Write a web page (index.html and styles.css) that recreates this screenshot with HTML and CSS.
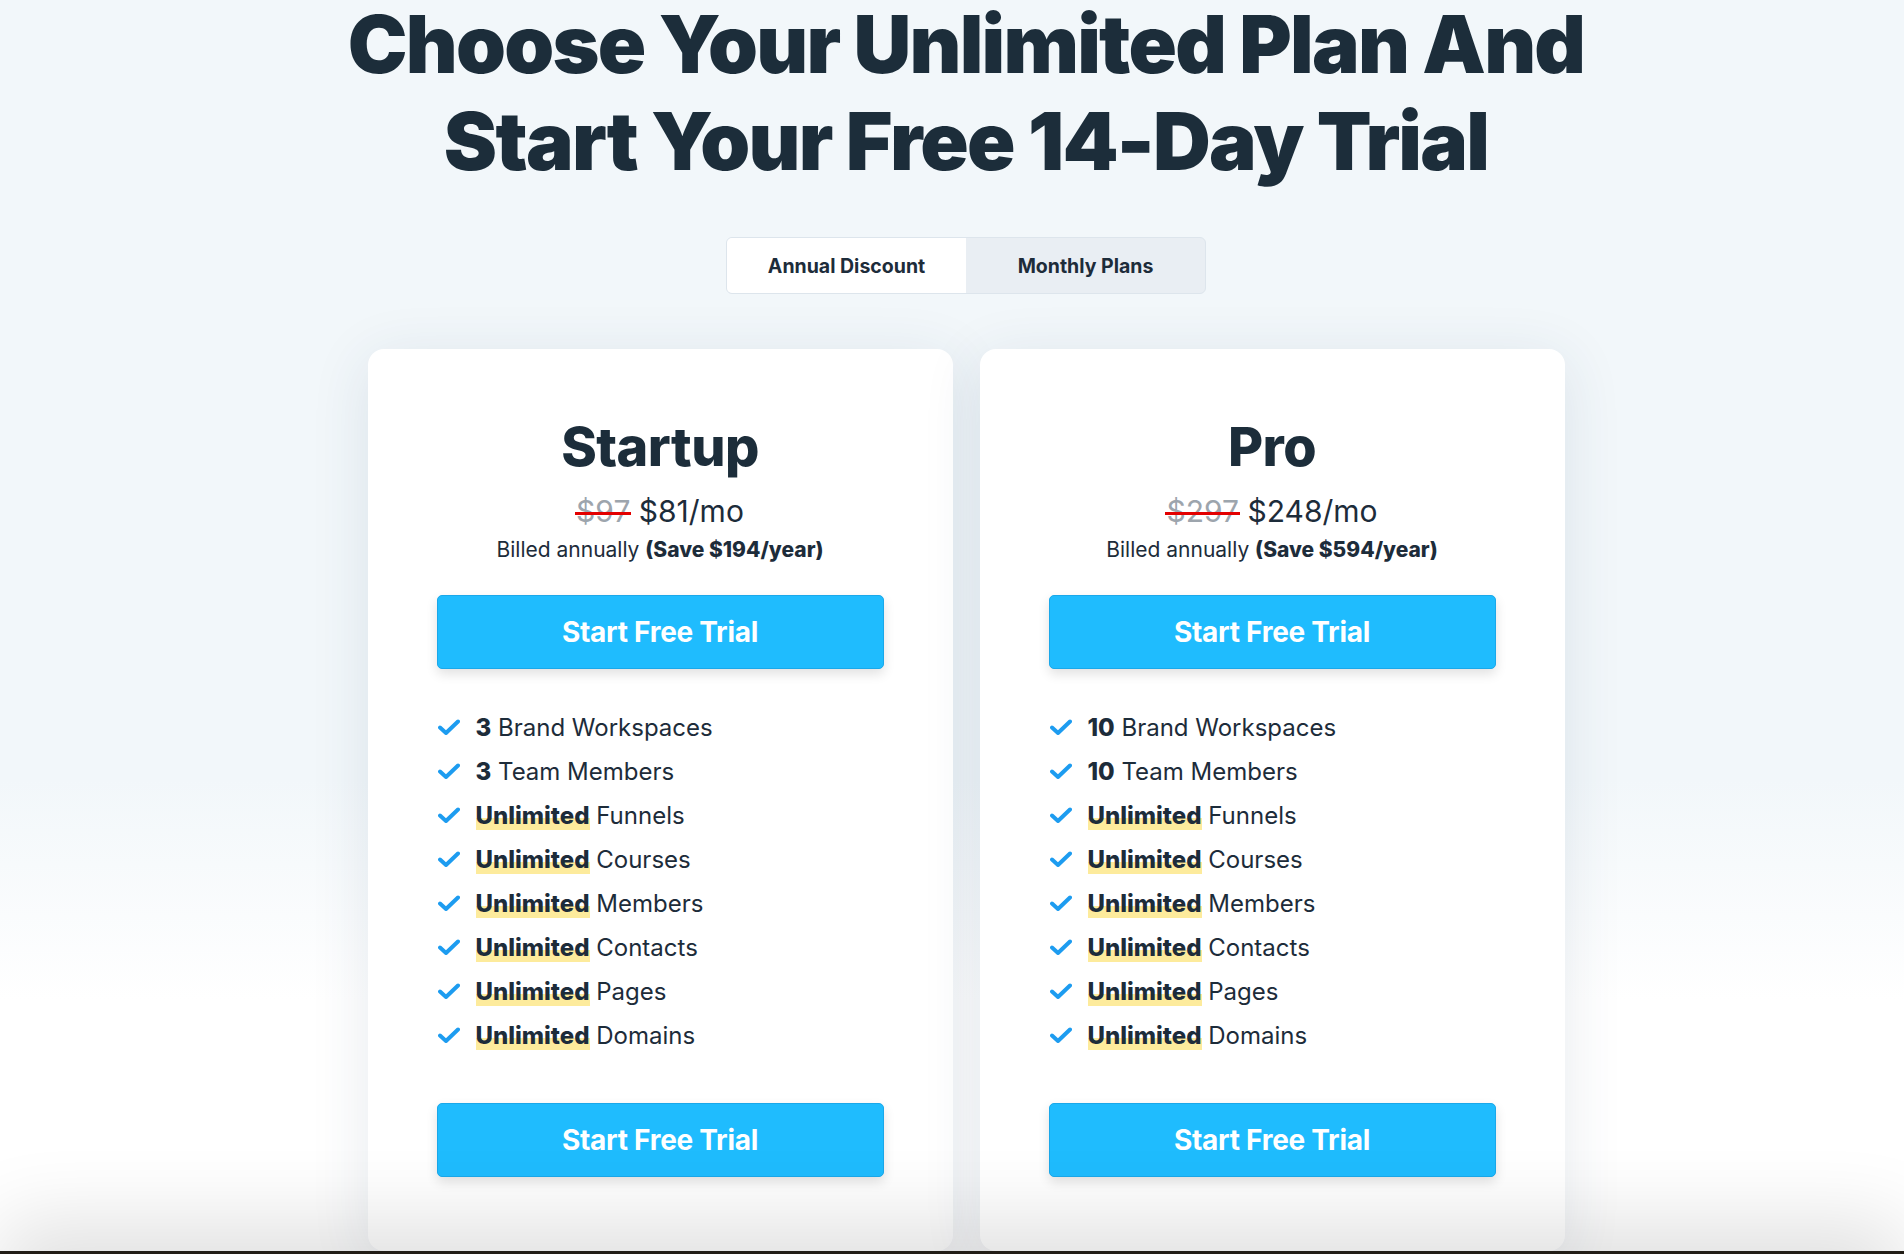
FILE: index.html
```html
<!DOCTYPE html>
<html lang="en">
<head>
<meta charset="utf-8">
<title>Pricing</title>
<link rel="stylesheet" href="styles.css">
</head>
<body>
<main class="pricing">
  <h1 class="headline"><span class="line">Choose Your Unlimited Plan And</span><span class="line">Start Your Free 14-Day Trial</span></h1>

  <div class="toggle">
    <button class="toggle-btn active">Annual Discount</button>
    <button class="toggle-btn">Monthly Plans</button>
  </div>

  <div class="cards">
    <section class="card">
      <h2 class="plan-name">Startup</h2>
      <p class="price"><span class="old">$97</span> $81/mo</p>
      <p class="billed">Billed annually <b>(Save $194/year)</b></p>
      <a class="cta" href="#">Start Free Trial</a>
      <ul class="features">
        <li><svg class="check" viewBox="0 0 22 16"><path d="M2 8.5l6 5.5L20 2.5"/></svg><span><b>3</b> Brand Workspaces</span></li>
        <li><svg class="check" viewBox="0 0 22 16"><path d="M2 8.5l6 5.5L20 2.5"/></svg><span><b>3</b> Team Members</span></li>
        <li><svg class="check" viewBox="0 0 22 16"><path d="M2 8.5l6 5.5L20 2.5"/></svg><span><b class="hl">Unlimited</b> Funnels</span></li>
        <li><svg class="check" viewBox="0 0 22 16"><path d="M2 8.5l6 5.5L20 2.5"/></svg><span><b class="hl">Unlimited</b> Courses</span></li>
        <li><svg class="check" viewBox="0 0 22 16"><path d="M2 8.5l6 5.5L20 2.5"/></svg><span><b class="hl">Unlimited</b> Members</span></li>
        <li><svg class="check" viewBox="0 0 22 16"><path d="M2 8.5l6 5.5L20 2.5"/></svg><span><b class="hl">Unlimited</b> Contacts</span></li>
        <li><svg class="check" viewBox="0 0 22 16"><path d="M2 8.5l6 5.5L20 2.5"/></svg><span><b class="hl">Unlimited</b> Pages</span></li>
        <li><svg class="check" viewBox="0 0 22 16"><path d="M2 8.5l6 5.5L20 2.5"/></svg><span><b class="hl">Unlimited</b> Domains</span></li>
      </ul>
      <a class="cta cta-bottom" href="#">Start Free Trial</a>
    </section>

    <section class="card">
      <h2 class="plan-name">Pro</h2>
      <p class="price"><span class="old">$297</span> $248/mo</p>
      <p class="billed">Billed annually <b>(Save $594/year)</b></p>
      <a class="cta" href="#">Start Free Trial</a>
      <ul class="features">
        <li><svg class="check" viewBox="0 0 22 16"><path d="M2 8.5l6 5.5L20 2.5"/></svg><span><b>10</b> Brand Workspaces</span></li>
        <li><svg class="check" viewBox="0 0 22 16"><path d="M2 8.5l6 5.5L20 2.5"/></svg><span><b>10</b> Team Members</span></li>
        <li><svg class="check" viewBox="0 0 22 16"><path d="M2 8.5l6 5.5L20 2.5"/></svg><span><b class="hl">Unlimited</b> Funnels</span></li>
        <li><svg class="check" viewBox="0 0 22 16"><path d="M2 8.5l6 5.5L20 2.5"/></svg><span><b class="hl">Unlimited</b> Courses</span></li>
        <li><svg class="check" viewBox="0 0 22 16"><path d="M2 8.5l6 5.5L20 2.5"/></svg><span><b class="hl">Unlimited</b> Members</span></li>
        <li><svg class="check" viewBox="0 0 22 16"><path d="M2 8.5l6 5.5L20 2.5"/></svg><span><b class="hl">Unlimited</b> Contacts</span></li>
        <li><svg class="check" viewBox="0 0 22 16"><path d="M2 8.5l6 5.5L20 2.5"/></svg><span><b class="hl">Unlimited</b> Pages</span></li>
        <li><svg class="check" viewBox="0 0 22 16"><path d="M2 8.5l6 5.5L20 2.5"/></svg><span><b class="hl">Unlimited</b> Domains</span></li>
      </ul>
      <a class="cta cta-bottom" href="#">Start Free Trial</a>
    </section>
  </div>
</main>
<footer class="next-section"></footer>
</body>
</html>
```
FILE: styles.css
```css
* { box-sizing: border-box; }

html, body {
  margin: 0;
  padding: 0;
}

body {
  font-family: Inter, "Noto Sans", "Liberation Sans", sans-serif;
  color: #1d2c3a;
  background: linear-gradient(180deg, #f2f7fa 0px, #f2f7fa 780px, #ffffff 1000px, #ffffff 100%);
  overflow: hidden;
}

.pricing {
  display: flex;
  flex-direction: column;
  align-items: center;
  padding-left: 28px;
  height: 1251px;
  overflow: hidden;
}

.headline {
  margin: 0;
  display: flex;
  flex-direction: column;
  align-items: center;
  font-size: 80px;
  line-height: 88px;
  font-weight: 900;
  letter-spacing: -0.022em;
  text-align: center;
  color: #1c2d3a;
}

.headline .line + .line { margin-top: 9px; }

.toggle {
  margin-top: 52px;
  display: flex;
  width: 480px;
  height: 57px;
  border: 1px solid #dde5ec;
  border-radius: 6px;
  overflow: hidden;
  background: #e9eef3;
}

.toggle-btn {
  flex: 1;
  border: 0;
  background: transparent;
  font-family: inherit;
  font-size: 19.5px;
  font-weight: 700;
  color: #1d2c3a;
  cursor: pointer;
}

.toggle-btn.active { background: #ffffff; }

.cards {
  margin-top: 55px;
  display: flex;
  gap: 27px;
}

.card {
  width: 585px;
  background: #ffffff;
  border-radius: 16px;
  padding: 71px 69px 74px;
  box-shadow: 0 10px 60px rgba(40, 60, 100, 0.11);
  display: flex;
  flex-direction: column;
  align-items: stretch;
  text-align: center;
}

.plan-name {
  margin: 0;
  font-size: 54px;
  line-height: 54px;
  font-weight: 800;
  letter-spacing: -0.01em;
  color: #1c2d3a;
}

.price {
  margin: 19px 0 0;
  font-size: 30px;
  line-height: 36px;
  font-weight: 400;
  color: #1d2c3a;
}

.price .old {
  position: relative;
  color: #9da5ad;
}

.price .old::after {
  content: "";
  position: absolute;
  left: -1px;
  right: -1px;
  top: 53%;
  height: 3px;
  background: #e30000;
}

.billed {
  margin: 7px 0 0;
  font-size: 21px;
  line-height: 28px;
  color: #1d2c3a;
}

.billed b { font-weight: 800; }

.cta {
  display: flex;
  align-items: center;
  justify-content: center;
  height: 74px;
  margin-top: 31px;
  background: #1fbcfe;
  border: 1px solid #1aa8ea;
  border-radius: 5px;
  color: #ffffff;
  font-size: 28px;
  font-weight: 700;
  letter-spacing: -0.01em;
  text-decoration: none;
  box-shadow: 0 5px 12px rgba(0, 0, 0, 0.12);
}

.cta-bottom { margin-top: 46px; }

.features {
  list-style: none;
  margin: 36px 0 0;
  padding: 0;
  text-align: left;
}

.features li {
  display: flex;
  align-items: center;
  height: 44px;
  font-size: 24px;
  gap: 16px;
  padding-left: 1px;
}

.features b { font-weight: 800; }

.features .hl {
  background: linear-gradient(180deg, transparent 60%, #fdeb9c 60%);
}

.check {
  width: 22px;
  height: 16px;
  flex: none;
  fill: none;
  stroke: #1d9cf0;
  stroke-width: 4;
  stroke-linecap: round;
  stroke-linejoin: round;
}

.next-section {
  position: relative;
  height: 200px;
  background: #221d16;
  box-shadow: 0 -30px 80px rgba(0, 0, 0, 0.12);
}
```
